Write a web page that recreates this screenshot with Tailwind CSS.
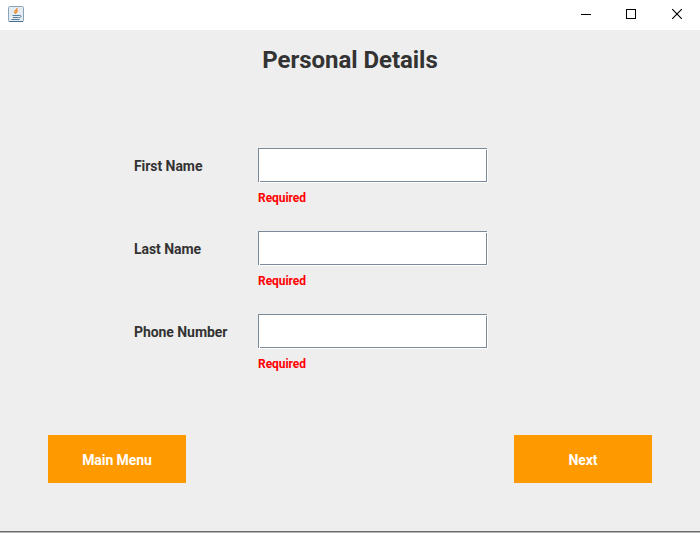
<!DOCTYPE html>
<html lang="en">
<head>
<meta charset="utf-8">
<title>Personal Details</title>
<script src="https://cdn.jsdelivr.net/npm/@tailwindcss/browser@4"></script>
</head>
<body class="w-[700px] h-[533px] overflow-hidden flex flex-col bg-[#eeeeee] font-['Roboto',sans-serif] font-bold text-[#333333]">
  <header class="h-[30px] shrink-0 bg-white flex justify-between pl-2">
    <svg class="w-4 h-4 mt-[6px]" viewBox="0 0 16 16" fill="none">
      <rect x=".5" y=".5" width="15" height="15" rx="1" fill="#e4ebf1" stroke="#8aa5ba"/>
      <path d="M1 15.500h14" stroke="#496e8c"/>
      <path d="M9 2c.8 1.800-3 2.600-2.300 4.200.3.700 1 1 .8 1.700M10 4.500c-1.800.8-2 1.600-1.300 2.300" stroke="#ee8019" stroke-width="1.200"/>
      <path d="M4.500 9.500h6.500M5 11.500h5.500M3.500 13.500h8M11 9.500c2.800-.6 2.600 2-.1 2.200" stroke="#5580a3"/>
    </svg>
    <div class="flex">
      <svg class="w-[46px] h-[30px]" viewBox="0 0 46 30" fill="none" stroke="#000"><path d="M18 14.500h10"/></svg>
      <svg class="w-[45px] h-[30px]" viewBox="0 0 45 30" fill="none" stroke="#000"><rect x="17.500" y="9.500" width="9" height="9"/></svg>
      <svg class="w-[46px] h-[30px]" viewBox="0 0 46 30" fill="none" stroke="#000" stroke-width="1.150"><path d="M18.200 9.200l9.600 9.600M27.800 9.200l-9.600 9.600"/></svg>
    </div>
  </header>
  <main class="h-[501px] shrink-0 flex flex-col">
    <h1 class="mt-[14px] text-center text-[24px] leading-[32px] tracking-[-0.04px]">Personal Details</h1>
    <form class="mt-[72px] pl-[134px] text-[14px] tracking-[-0.06px]">
      <div class="flex h-[83px]">
        <label for="first" class="w-[124px] leading-[36px]">First Name</label>
        <div>
          <div class="relative w-[229px] h-[34px] before:absolute before:left-px before:bottom-0 before:size-px before:bg-white after:absolute after:right-0 after:top-px after:size-px after:bg-white"><input id="first" class="block w-full h-full bg-white border border-[#7a8a99] shadow-[1px_1px_0_#fff]"></div>
          <p class="mt-2 text-[12px] leading-4 text-[#ff0000]">Required</p>
        </div>
      </div>
      <div class="flex h-[83px]">
        <label for="last" class="w-[124px] leading-[36px]">Last Name</label>
        <div>
          <div class="relative w-[229px] h-[34px] before:absolute before:left-px before:bottom-0 before:size-px before:bg-white after:absolute after:right-0 after:top-px after:size-px after:bg-white"><input id="last" class="block w-full h-full bg-white border border-[#7a8a99] shadow-[1px_1px_0_#fff]"></div>
          <p class="mt-2 text-[12px] leading-4 text-[#ff0000]">Required</p>
        </div>
      </div>
      <div class="flex h-[83px]">
        <label for="phone" class="w-[124px] leading-[36px]">Phone Number</label>
        <div>
          <div class="relative w-[229px] h-[34px] before:absolute before:left-px before:bottom-0 before:size-px before:bg-white after:absolute after:right-0 after:top-px after:size-px after:bg-white"><input id="phone" class="block w-full h-full bg-white border border-[#7a8a99] shadow-[1px_1px_0_#fff]"></div>
          <p class="mt-2 text-[12px] leading-4 text-[#ff0000]">Required</p>
        </div>
      </div>
    </form>
    <div class="mt-[38px] px-12 flex justify-between text-[14px] tracking-[-0.06px] text-white">
      <button class="w-[138px] h-[48px] pt-[2px] bg-[#ff9900]">Main Menu</button>
      <button class="w-[138px] h-[48px] pt-[2px] bg-[#ff9900]">Next</button>
    </div>
  </main>
  <footer class="h-[2px] shrink-0 bg-[#b5b5b5] border-t border-[#6b6b6b]"></footer>
</body>
</html>
